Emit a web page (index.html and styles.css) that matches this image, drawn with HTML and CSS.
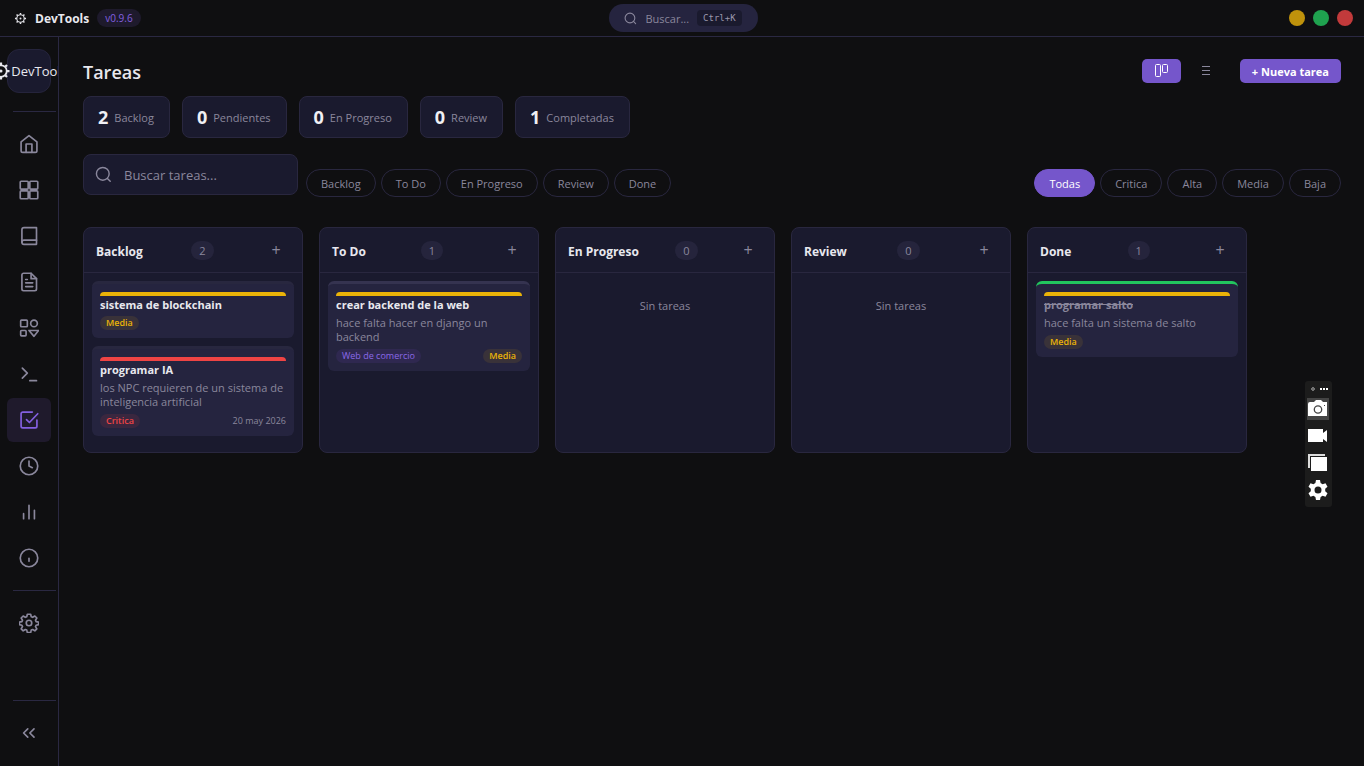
FILE: index.html
```html
<!DOCTYPE html>
<html lang="es">
<head>
  <meta charset="UTF-8">
  <meta name="viewport" content="width=device-width, initial-scale=1">
  <title>DevTools</title>
  <link rel="stylesheet" href="styles.css">
</head>

<body>

<svg class="sprite" aria-hidden="true">
  <symbol id="cog" viewBox="0 0 16 16">
    <circle cx="8" cy="8" r="4.6" fill="none" stroke="currentColor" stroke-width="1.4"/>
    <circle cx="8" cy="8" r="1.2" fill="currentColor"/>
    <path d="M8 1.2v2M8 12.8v2M1.2 8h2M12.8 8h2M3.2 3.2l1.4 1.4M11.4 11.4l1.4 1.4M3.2 12.8l1.4-1.4M11.4 4.6l1.4-1.4" stroke="currentColor" stroke-width="1.8"/>
  </symbol>
  <symbol id="search" viewBox="0 0 24 24">
    <circle cx="11" cy="11" r="9"/><path d="M21.5 21.5l-4-4"/>
  </symbol>
</svg>

<header class="titlebar">
  <div class="brand">
    <svg class="brand__icon"><use href="#cog"/></svg>
    <span class="brand__name">DevTools</span>
    <span class="brand__version">v0.9.6</span>
  </div>
  <button class="quick-search" type="button">
    <svg class="icon icon--small"><use href="#search"/></svg>
    <span>Buscar...</span>
    <kbd>Ctrl+K</kbd>
  </button>
  <div class="window-buttons">
    <button class="dot dot--yellow" type="button" aria-label="Minimizar"></button>
    <button class="dot dot--green" type="button" aria-label="Maximizar"></button>
    <button class="dot dot--red" type="button" aria-label="Cerrar"></button>
  </div>
</header>

<div class="layout">

  <nav class="sidebar">
    <div class="logo"><svg class="logo__icon"><use href="#cog"/></svg>DevTools</div>
    <hr>
    <a href="#" class="nav-item" aria-label="Inicio">
      <svg class="icon" viewBox="0 0 24 24"><path d="M2.500 9.500L12 2l9.500 7.500V20a2 2 0 0 1-2 2h-15a2 2 0 0 1-2-2z"/><path d="M8.500 22V12h7v10"/></svg>
    </a>
    <a href="#" class="nav-item" aria-label="Proyectos">
      <svg class="icon" viewBox="0 0 24 24"><rect x="1.500" y="1.500" width="9.500" height="9.500" rx="1"/><rect x="13" y="1.500" width="9.500" height="9.500" rx="1"/><rect x="1.500" y="13" width="9.500" height="9.500" rx="1"/><rect x="13" y="13" width="9.500" height="9.500" rx="1"/></svg>
    </a>
    <a href="#" class="nav-item" aria-label="Biblioteca">
      <svg class="icon" viewBox="0 0 24 24"><path d="M3.500 19.500A2.500 2.500 0 0 1 6 17h15"/><path d="M6 2h15v20H6a2.500 2.500 0 0 1-2.500-2.500v-15A2.500 2.500 0 0 1 6 2z"/></svg>
    </a>
    <a href="#" class="nav-item" aria-label="Documentos">
      <svg class="icon" viewBox="0 0 24 24"><path d="M14.500 1.500H5.500a2 2 0 0 0-2 2v17a2 2 0 0 0 2 2h13.500a2 2 0 0 0 2-2V8z"/><path d="M14.500 1.500V8H21M16.500 13H8M16.500 17.500H8M10 9H8"/></svg>
    </a>
    <a href="#" class="nav-item" aria-label="Recursos">
      <svg class="icon" viewBox="0 0 24 24"><rect x="2" y="2.500" width="8" height="8" rx="1"/><circle cx="18" cy="6.500" r="4"/><rect x="2" y="15" width="6.500" height="6.500" rx="1"/><path d="M12 15h11.500L18 22z"/></svg>
    </a>
    <a href="#" class="nav-item" aria-label="Terminal">
      <svg class="icon" viewBox="0 0 24 24"><path d="M4 17l6-6-6-6M13 20h8"/></svg>
    </a>
    <a href="#" class="nav-item nav-item--active" aria-label="Tareas">
      <svg class="icon" viewBox="0 0 24 24"><path d="M9 11.500l3.500 3.500L22.500 4.500"/><path d="M21.500 12v7.500a2 2 0 0 1-2 2h-15a2 2 0 0 1-2-2v-15a2 2 0 0 1 2-2H16"/></svg>
    </a>
    <a href="#" class="nav-item" aria-label="Tiempo">
      <svg class="icon" viewBox="0 0 24 24"><circle cx="12" cy="12" r="10.500"/><path d="M12 6v6l4 2"/></svg>
    </a>
    <a href="#" class="nav-item" aria-label="Estadisticas">
      <svg class="icon" viewBox="0 0 24 24"><path d="M18.500 20V10M12 20V4M5.500 20v-6"/></svg>
    </a>
    <a href="#" class="nav-item" aria-label="Acerca de">
      <svg class="icon" viewBox="0 0 24 24"><circle cx="12" cy="12" r="10.500"/><path d="M12 12.500v3.500"/></svg>
    </a>
    <hr>
    <a href="#" class="nav-item" aria-label="Ajustes">
      <svg class="icon" viewBox="0 0 24 24"><circle cx="12" cy="12" r="3.300"/><path d="M10 1.500h4l.7 3 1.700.7 2.600-1.600 2.400 2.400-1.600 2.600.7 1.700 3 .7v3l-3 .7-.7 1.700 1.600 2.600-2.400 2.400-2.600-1.600-1.700.7-.7 3h-4l-.7-3-1.700-.7L5 21.400 2.600 19l1.600-2.600-.7-1.700-3-.7v-3l3-.7.7-1.700L2.600 6 5 3.600l2.600 1.600 1.700-.7z"/></svg>
    </a>
    <div class="sidebar__bottom">
      <hr>
      <button class="nav-item" type="button" aria-label="Contraer">
        <svg class="icon" viewBox="0 0 24 24"><path d="M10.500 17l-5-5 5-5M18 17l-5-5 5-5"/></svg>
      </button>
    </div>
  </nav>

  <main class="content">
    <div class="page-header">
      <h1>Tareas</h1>
      <div class="actions">
        <button class="view-button view-button--active" type="button" aria-label="Tablero">
          <svg class="view-icon" viewBox="0 0 14 14"><rect x="1.500" y=".5" width="5" height="12" rx="1"/><rect x="8.500" y=".5" width="5" height="8" rx="1"/></svg>
        </button>
        <button class="view-button" type="button" aria-label="Lista">
          <svg class="view-icon" viewBox="0 0 14 14"><path d="M3 2.500h8M3 6.500h8M3 10.500h8"/></svg>
        </button>
        <button class="new-task" type="button">+ Nueva tarea</button>
      </div>
    </div>

    <div class="stats">
      <div class="stat"><strong>2</strong> Backlog</div>
      <div class="stat"><strong>0</strong> Pendientes</div>
      <div class="stat"><strong>0</strong> En Progreso</div>
      <div class="stat"><strong>0</strong> Review</div>
      <div class="stat"><strong>1</strong> Completadas</div>
    </div>

    <div class="filters">
      <label class="search">
        <svg class="icon icon--search"><use href="#search"/></svg>
        <input type="text" placeholder="Buscar tareas..." aria-label="Buscar tareas">
      </label>
      <div class="chips">
        <button class="chip" type="button">Backlog</button>
        <button class="chip" type="button">To Do</button>
        <button class="chip" type="button">En Progreso</button>
        <button class="chip" type="button">Review</button>
        <button class="chip" type="button">Done</button>
      </div>
      <div class="chips chips--priority">
        <button class="chip chip--active" type="button">Todas</button>
        <button class="chip" type="button">Critica</button>
        <button class="chip" type="button">Alta</button>
        <button class="chip" type="button">Media</button>
        <button class="chip" type="button">Baja</button>
      </div>
    </div>

    <div class="board">
      <section class="column">
        <header class="column__header">
          <h2>Backlog</h2>
          <span class="count">2</span>
          <button class="add" type="button" aria-label="Agregar a Backlog">+</button>
        </header>
        <div class="column__body">
          <article class="card">
            <div class="card__bar"></div>
            <h3>sistema de blockchain</h3>
            <div class="card__meta"><span class="tag tag--media">Media</span></div>
          </article>
          <article class="card">
            <div class="card__bar card__bar--critica"></div>
            <h3>programar IA</h3>
            <p>los NPC requieren de un sistema de inteligencia artificial</p>
            <div class="card__meta">
              <span class="tag tag--critica">Critica</span>
              <time datetime="2026-05-20">20 may 2026</time>
            </div>
          </article>
        </div>
      </section>

      <section class="column">
        <header class="column__header">
          <h2>To Do</h2>
          <span class="count">1</span>
          <button class="add" type="button" aria-label="Agregar a To Do">+</button>
        </header>
        <div class="column__body">
          <article class="card card--todo">
            <div class="card__bar"></div>
            <h3>crear backend de la web</h3>
            <p>hace falta hacer en django un backend</p>
            <div class="card__meta">
              <span class="tag tag--project">Web de comercio</span>
              <span class="tag tag--media">Media</span>
            </div>
          </article>
        </div>
      </section>

      <section class="column">
        <header class="column__header">
          <h2>En Progreso</h2>
          <span class="count">0</span>
          <button class="add" type="button" aria-label="Agregar a En Progreso">+</button>
        </header>
        <div class="column__body">
          <p class="empty">Sin tareas</p>
        </div>
      </section>

      <section class="column">
        <header class="column__header">
          <h2>Review</h2>
          <span class="count">0</span>
          <button class="add" type="button" aria-label="Agregar a Review">+</button>
        </header>
        <div class="column__body">
          <p class="empty">Sin tareas</p>
        </div>
      </section>

      <section class="column">
        <header class="column__header">
          <h2>Done</h2>
          <span class="count">1</span>
          <button class="add" type="button" aria-label="Agregar a Done">+</button>
        </header>
        <div class="column__body">
          <article class="card card--done">
            <div class="card__bar"></div>
            <h3>programar salto</h3>
            <p>hace falta un sistema de salto</p>
            <div class="card__meta"><span class="tag tag--media">Media</span></div>
          </article>
        </div>
      </section>
    </div>
  </main>

</div>

<!-- Floating capture bar -->
<div class="capture">
  <svg class="capture__grip" viewBox="0 0 22 7"><circle cx="6" cy="3" r="1.300" fill="none" stroke="#aaa"/><path d="M13 2h2v2h-2zM16 2h2v2h-2zM19 2h2v2h-2z" fill="#fff"/></svg>
  <button class="capture__button capture__button--active" type="button" aria-label="Captura">
    <svg viewBox="0 0 22 22"><path d="M1 6q0-2 2-2h4l2-2h5l2 2h4v14H1z" fill="#fff"/><circle cx="11" cy="11.500" r="3.700" fill="none" stroke="#444" stroke-width="1.300"/><path d="M17 7h1v1h-1z" fill="#444"/></svg>
  </button>
  <button class="capture__button" type="button" aria-label="Video">
    <svg viewBox="0 0 22 22"><path d="M1 4h15v4l4-3v12l-4-3v3H1z" fill="#fff"/></svg>
  </button>
  <button class="capture__button" type="button" aria-label="Galeria">
    <svg viewBox="0 0 22 22"><path d="M1 2h17v2H3v12H1z" fill="#ddd"/><path d="M4 5h16v14H4z" fill="#fff"/></svg>
  </button>
  <button class="capture__button" type="button" aria-label="Opciones">
    <svg viewBox="0 0 22 22"><path fill="#fff" fill-rule="evenodd" d="M9 1h4l.6 3 2 1.200 2.900-1 2 3.500-2.300 2v2.600l2.300 2-2 3.500-2.900-1-2 1.200-.6 3H9l-.6-3-2-1.200-2.900 1-2-3.500 2.300-2V9.700l-2.300-2 2-3.500 2.900 1 2-1.200zM11 7.500a3.500 3.500 0 1 0 0 7 3.500 3.500 0 0 0 0-7z"/></svg>
  </button>
</div>

</body>
</html>
```
FILE: styles.css
```css
* { box-sizing: border-box; }

body {
  display: flex;
  flex-direction: column;
  min-height: 100vh;
  margin: 0;
  font-family: "Segoe UI", "Open Sans", "Noto Sans", sans-serif;
  font-size: 14px;
  color: #e8e8ee;
  background-color: #0f0f11;
}

button,
input {
  font-family: inherit;
  color: inherit;
}

button {
  padding: 0;
  border: 0;
  background: none;
  cursor: pointer;
}

h1, h2, h3, p { margin: 0; }

.sprite { display: none; }

.icon {
  width: 20px;
  height: 20px;
  fill: none;
  stroke: currentColor;
  stroke-width: 2;
  stroke-linecap: round;
  stroke-linejoin: round;
}
.icon--small {
  width: 13px;
  height: 13px;
}
.icon--search {
  width: 17px;
  height: 17px;
}


/* Title bar */

.titlebar {
  display: grid;
  grid-template-columns: 1fr auto 1fr;
  align-items: center;
  height: 37px;
  padding: 0 11px 0 14px;
  border-bottom: 1px solid #2a2842;
}

.brand {
  display: flex;
  align-items: center;
  gap: 8px;
}

.brand__icon {
  width: 13px;
  height: 13px;
}

.brand__name {
  font-size: 12px;
  font-weight: 700;
}

.brand__version {
  padding: 0 8px;
  font-size: 10px;
  line-height: 18px;
  color: #8460e0;
  background-color: #1e1a2c;
  border-radius: 9px;
}

.quick-search {
  display: flex;
  align-items: center;
  gap: 8px;
  height: 28px;
  padding: 0 16px 0 15px;
  font-size: 11px;
  color: #8a879c;
  background-color: #25243f;
  border-radius: 14px;
}

kbd {
  padding: 0 6px;
  font-family: "DejaVu Sans Mono", monospace;
  font-size: 9px;
  line-height: 16px;
  color: #9a98ac;
  background-color: #1a1a2e;
  border-radius: 4px;
}

.window-buttons {
  display: flex;
  gap: 8px;
  justify-content: flex-end;
}

.dot {
  width: 16px;
  height: 16px;
  border-radius: 50%;
}
.dot--yellow { background-color: #bf920c; }
.dot--green { background-color: #1fa24f; }
.dot--red { background-color: #c23a3b; }


/* Sidebar */

.layout {
  display: flex;
  flex: 1;
}

.sidebar {
  display: flex;
  flex-direction: column;
  gap: 2px;
  width: 59px;
  padding: 12px 2px 11px 7px;
  overflow: hidden;
  border-right: 1px solid #2a2842;
}

.sidebar hr {
  width: 43px;
  height: 1px;
  margin: 8px 0 8px 6px;
  border: 0;
  background-color: #2a2842;
}

.logo {
  display: flex;
  align-items: center;
  justify-content: center;
  width: 44px;
  height: 44px;
  margin-bottom: 8px;
  font-size: 13px;
  background-color: #1a1a2e;
  border: 1px solid #25243c;
  border-radius: 12px;
}

.logo__icon {
  flex: none;
  width: 20px;
  height: 20px;
}

.nav-item {
  display: flex;
  align-items: center;
  justify-content: center;
  width: 44px;
  height: 44px;
  color: #8a879c;
  border-radius: 6px;
}
.nav-item--active {
  color: #8460e0;
  background-color: #1f1a2c;
}

.sidebar__bottom { margin-top: auto; }
.sidebar__bottom hr { margin-bottom: 10px; }


/* Page header */

.content {
  flex: 1;
  min-width: 0;
  padding: 22px 23px 24px 24px;
}

.page-header {
  display: flex;
  align-items: center;
  justify-content: space-between;
  height: 24px;
}

h1 {
  padding-top: 2px;
  font-size: 18px;
  font-weight: 600;
}

.actions {
  display: flex;
  align-items: center;
}

.view-button {
  display: flex;
  align-items: center;
  justify-content: center;
  width: 39px;
  height: 24px;
  margin-right: 6px;
  color: #8a879c;
  border-radius: 5px;
}
.view-button--active {
  color: #fff;
  background-color: #7556cb;
}

.view-icon {
  width: 14px;
  height: 14px;
  fill: none;
  stroke: currentColor;
}

.new-task {
  height: 24px;
  margin-left: 8px;
  padding: 0 12px;
  font-size: 11px;
  font-weight: 700;
  color: #fff;
  background-color: #7556cb;
  border-radius: 5px;
}

.stats {
  display: flex;
  gap: 12px;
  margin-top: 13px;
}

.stat {
  display: flex;
  align-items: center;
  gap: 6px;
  height: 42px;
  padding: 0 15px 0 14px;
  font-size: 11px;
  color: #8a879c;
  background-color: #1a1a2e;
  border: 1px solid #29273f;
  border-radius: 8px;
}
.stat strong {
  font-size: 18px;
  color: #f0f0f4;
}


/* Filters */

.filters {
  display: flex;
  align-items: flex-start;
  gap: 8px;
  margin-top: 16px;
}

.search {
  display: flex;
  align-items: center;
  gap: 12px;
  width: 215px;
  height: 41px;
  padding: 0 11px;
  color: #8a879c;
  background-color: #1a1a2e;
  border: 1px solid #29273f;
  border-radius: 8px;
}

.search input {
  flex: 1;
  min-width: 0;
  padding: 0;
  font-size: 13px;
  border: 0;
  outline: 0;
  background: none;
}
.search input::placeholder { color: #8a879c; }

.chips {
  display: flex;
  gap: 5px;
  margin-top: 15px;
}
.chips--priority { margin-left: auto; }

.chip {
  height: 28px;
  padding: 0 14px;
  font-size: 11px;
  color: #8a879c;
  border: 1px solid #29273f;
  border-radius: 14px;
}
.chip--active {
  color: #fff;
  background-color: #7556cb;
  border-color: #7556cb;
}


/* Board */

.board {
  display: flex;
  gap: 16px;
  margin-top: 30px;
}

.column {
  flex: none;
  width: 220px;
  background-color: #1a1a2e;
  border: 1px solid #29273f;
  border-radius: 8px;
}

.column__header {
  display: flex;
  align-items: center;
  justify-content: space-between;
  height: 45px;
  padding: 0 12px;
  border-bottom: 1px solid #29273f;
}

.column__header h2 {
  padding-top: 2px;
  font-size: 12px;
  font-weight: 700;
}

.count {
  padding: 0 8px;
  font-size: 11px;
  line-height: 19px;
  color: #8a879c;
  background-color: #25243c;
  border-radius: 10px;
}

.add {
  width: 28px;
  height: 28px;
  font-size: 16px;
  line-height: 24px;
  color: #8a879c;
}

.column__body { padding: 8px; }

.card {
  margin-bottom: 8px;
  padding: 8px;
  background-color: #25243f;
  border-top: 3px solid #28273f;
  border-radius: 6px;
}
.card--todo { border-top-color: #353350; }
.card--done { border-top-color: #22c55e; }

.card__bar {
  height: 4px;
  background-color: #eab308;
  border-radius: 4px 4px 0 0;
}
.card__bar--critica { background-color: #ef4444; }

.card h3 {
  margin-bottom: 3px;
  font-size: 11px;
  font-weight: 700;
  line-height: 17px;
}
.card--done h3 {
  color: #8a879c;
  text-decoration: line-through;
}

.card p {
  margin-bottom: 5px;
  font-size: 11px;
  line-height: 14px;
  color: #8a879c;
}

.card__meta {
  display: flex;
  align-items: center;
  justify-content: space-between;
}

.card time {
  font-size: 9px;
  line-height: 14px;
  color: #8a879c;
}

.tag {
  padding: 0 6px;
  font-size: 9px;
  font-weight: 600;
  line-height: 14px;
  border-radius: 7px;
}
.tag--media {
  color: #eab308;
  background-color: #393239;
}
.tag--critica {
  color: #ef4444;
  background-color: #3a273f;
}
.tag--project {
  font-weight: 400;
  color: #8b68e8;
  background-color: #2f2850;
}

.empty {
  padding-top: 16px;
  font-size: 11px;
  line-height: 17px;
  text-align: center;
  color: #8a879c;
}


/* Capture bar */

.capture {
  position: fixed;
  top: 381px;
  right: 32px;
  display: flex;
  flex-direction: column;
  gap: 5px;
  width: 27px;
  padding: 5px 3px 6px 2px;
  background-color: #1c1c1c;
  border-radius: 3px;
}

.capture__grip {
  width: 22px;
  height: 7px;
}

.capture__button {
  width: 22px;
  height: 22px;
}
.capture__button--active { background-color: #444; }
.capture__button svg { display: block; }
```
